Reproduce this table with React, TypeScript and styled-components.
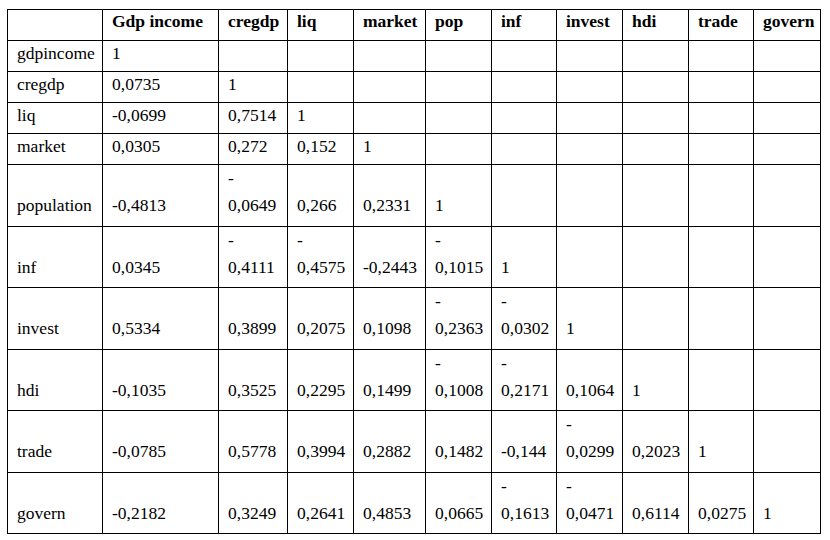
import React from "react";
import styled, { createGlobalStyle } from "styled-components";

const Global = createGlobalStyle`
  html, body { margin: 0; padding: 0; background: #ffffff; }
  body { font-family: 'Liberation Serif', 'Times New Roman', serif; color: #000; }
`;

const Page = styled.div`
  padding: 9px 0 0 7px;
  width: 830px;
  height: 540px;
  box-sizing: border-box;
  background: #fff;
`;

const Table = styled.table`
  border-collapse: collapse;
  table-layout: fixed;
  width: 814px;
  font-family: 'Liberation Serif', 'Times New Roman', serif;
  font-size: 17.5px;
  color: #000;
`;

const Row = styled.tr<{ $tall: boolean }>`
  height: ${(p) => (p.$tall ? "61.5px" : "31px")};
`;

const Cell = styled.td<{ $tall: boolean }>`
  border: 1px solid #000;
  padding: 0 2px ${(p) => (p.$tall ? "6.5px" : "5px")} 9px;
  line-height: ${(p) => (p.$tall ? "27px" : "25px")};
  vertical-align: bottom;
  white-space: nowrap;
  overflow: hidden;
`;

const HeadCell = styled.th`
  border: 1px solid #000;
  padding: 0 2px 8px 9px;
  line-height: 22px;
  text-align: left;
  font-weight: bold;
  vertical-align: bottom;
  white-space: nowrap;
  overflow: hidden;
`;

const HeadRow = styled.tr`
  height: 31px;
`;

const Line = styled.span`
  display: block;
`;

const columns = [
  { label: "", width: 95 },
  { label: "Gdp income", width: 116 },
  { label: "cregdp", width: 69 },
  { label: "liq", width: 66 },
  { label: "market", width: 72 },
  { label: "pop", width: 66 },
  { label: "inf", width: 65 },
  { label: "invest", width: 66 },
  { label: "hdi", width: 66 },
  { label: "trade", width: 65 },
  { label: "govern", width: 67 },
];

const rows: { name: string; values: string[] }[] = [
  { name: "gdpincome", values: ["1"] },
  { name: "cregdp", values: ["0,0735", "1"] },
  { name: "liq", values: ["-0,0699", "0,7514", "1"] },
  { name: "market", values: ["0,0305", "0,272", "0,152", "1"] },
  { name: "population", values: ["-0,4813", "-0,0649", "0,266", "0,2331", "1"] },
  { name: "inf", values: ["0,0345", "-0,4111", "-0,4575", "-0,2443", "-0,1015", "1"] },
  { name: "invest", values: ["0,5334", "0,3899", "0,2075", "0,1098", "-0,2363", "-0,0302", "1"] },
  { name: "hdi", values: ["-0,1035", "0,3525", "0,2295", "0,1499", "-0,1008", "-0,2171", "0,1064", "1"] },
  { name: "trade", values: ["-0,0785", "0,5778", "0,3994", "0,2882", "0,1482", "-0,144", "-0,0299", "0,2023", "1"] },
  { name: "govern", values: ["-0,2182", "0,3249", "0,2641", "0,4853", "0,0665", "-0,1613", "-0,0471", "0,6114", "0,0275", "1"] },
];

// a negative value wraps after its minus sign when the column is too narrow
const wraps = (value: string, colWidth: number) =>
  value.startsWith("-") && value.length >= 7 && colWidth < 70;

function Value({ value, colWidth }: { value: string; colWidth: number }) {
  if (wraps(value, colWidth)) {
    return (
      <>
        <Line>-</Line>
        <Line>{value.slice(1)}</Line>
      </>
    );
  }
  return <>{value}</>;
}

export default function App() {
  return (
    <>
      <Global />
      <Page>
        <Table>
          <colgroup>
            {columns.map((c, i) => (
              <col key={i} style={{ width: c.width }} />
            ))}
          </colgroup>
          <thead>
            <HeadRow>
              {columns.map((c, i) => (
                <HeadCell key={i}>{c.label}</HeadCell>
              ))}
            </HeadRow>
          </thead>
          <tbody>
            {rows.map((r) => {
              const tall = r.values.some((v, i) => wraps(v, columns[i + 1].width));
              return (
                <Row key={r.name} $tall={tall}>
                  <Cell $tall={tall}>{r.name}</Cell>
                  {columns.slice(1).map((c, i) => (
                    <Cell key={i} $tall={tall}>
                      {r.values[i] !== undefined ? (
                        <Value value={r.values[i]} colWidth={c.width} />
                      ) : null}
                    </Cell>
                  ))}
                </Row>
              );
            })}
          </tbody>
        </Table>
      </Page>
    </>
  );
}
